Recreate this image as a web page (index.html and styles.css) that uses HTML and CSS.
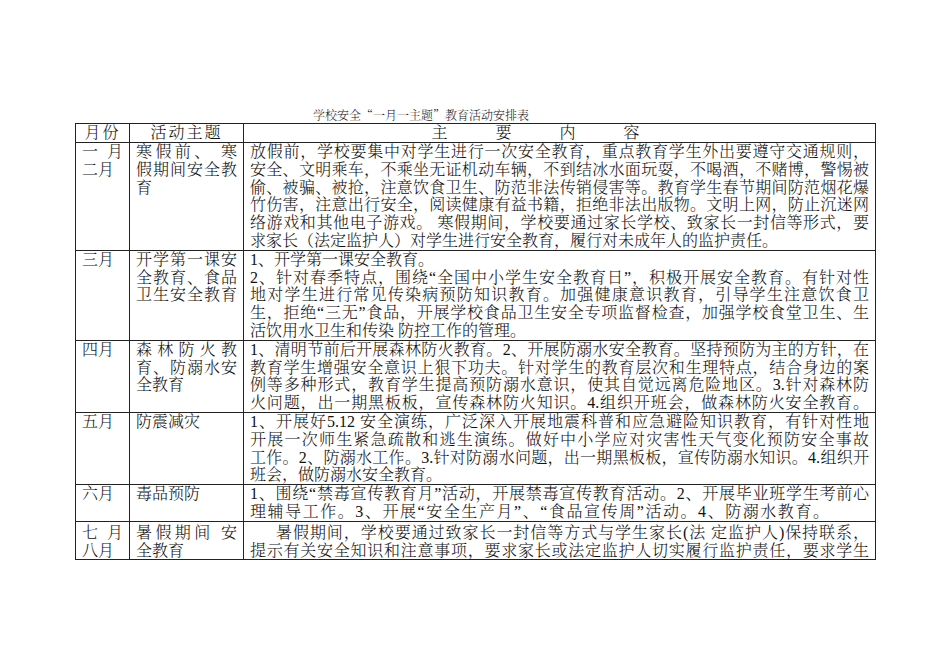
FILE: index.html
```html
<!DOCTYPE html>
<html lang="zh-CN">
<head>
<meta charset="utf-8">
<title>学校安全“一月一主题”教育活动安排表</title>
<link rel="stylesheet" href="styles.css">
</head>
<body>
<div class="page">
  <p class="title">学校安全“一月一主题”教育活动安排表</p>
  <table class="plan">
    <colgroup>
      <col class="col-month">
      <col class="col-theme">
      <col class="col-content">
    </colgroup>
    <thead>
      <tr>
        <th class="h-month">月份</th>
        <th class="h-theme">活动主题</th>
        <th class="h-content">主要内容</th>
      </tr>
    </thead>
    <tbody>
      <tr>
        <td class="month"><span class="jl">一月</span><span class="ln">二月</span></td>
        <td class="theme"><span class="jl">寒假前、 寒</span><span class="jl">假期间安全教</span><span class="ln">育</span></td>
        <td class="content">
          <span class="jl">放假前，学校要集中对学生进行一次安全教育，重点教育学生外出要遵守交通规则，</span>
          <span class="jl">安全、文明乘车，不乘坐无证机动车辆，不到结冰水面玩耍，不喝酒，不赌博，警惕被</span>
          <span class="jl">偷、被骗、被抢，注意饮食卫生、防范非法传销侵害等。教育学生春节期间防范烟花爆</span>
          <span class="jl">竹伤害，注意出行安全，阅读健康有益书籍，拒绝非法出版物。文明上网，防止沉迷网</span>
          <span class="jl">络游戏和其他电子游戏。 寒假期间，学校要通过家长学校、致家长一封信等形式，要</span>
          <span class="ln">求家长（法定监护人）对学生进行安全教育，履行对未成年人的监护责任。</span>
        </td>
      </tr>
      <tr>
        <td class="month"><span class="ln">三月</span></td>
        <td class="theme"><span class="jl">开学第一课安</span><span class="jl">全教育、食品</span><span class="jl">卫生安全教育</span></td>
        <td class="content">
          <span class="ln">1、开学第一课安全教育。</span>
          <span class="jl">2、针对春季特点，围绕“全国中小学生安全教育日”，积极开展安全教育。有针对性</span>
          <span class="jl">地对学生进行常见传染病预防知识教育。加强健康意识教育，引导学生注意饮食卫</span>
          <span class="jl">生，拒绝“三无”食品，开展学校食品卫生安全专项监督检查，加强学校食堂卫生、生</span>
          <span class="ln">活饮用水卫生和传染 防控工作的管理。</span>
        </td>
      </tr>
      <tr>
        <td class="month"><span class="ln">四月</span></td>
        <td class="theme"><span class="jl">森林防火教</span><span class="jl">育、防溺水安</span><span class="ln">全教育</span></td>
        <td class="content">
          <span class="jl">1、清明节前后开展森林防火教育。2、开展防溺水安全教育。坚持预防为主的方针，在</span>
          <span class="jl">教育学生增强安全意识上狠下功夫。针对学生的教育层次和生理特点，结合身边的案</span>
          <span class="jl">例等多种形式，教育学生提高预防溺水意识，使其自觉远离危险地区。3.针对森林防</span>
          <span class="jl">火问题，出一期黑板板，宣传森林防火知识。4.组织开班会，做森林防火安全教育。</span>
        </td>
      </tr>
      <tr>
        <td class="month"><span class="ln">五月</span></td>
        <td class="theme"><span class="ln">防震减灾</span></td>
        <td class="content">
          <span class="jl">1、开展好5.12 安全演练，广泛深入开展地震科普和应急避险知识教育，有针对性地</span>
          <span class="jl">开展一次师生紧急疏散和逃生演练。做好中小学应对灾害性天气变化预防安全事故</span>
          <span class="jl">工作。2、防溺水工作。3.针对防溺水问题，出一期黑板板，宣传防溺水知识。4.组织开</span>
          <span class="ln">班会，做防溺水安全教育。</span>
        </td>
      </tr>
      <tr>
        <td class="month"><span class="ln">六月</span></td>
        <td class="theme"><span class="ln">毒品预防</span></td>
        <td class="content">
          <span class="jl">1、围绕“禁毒宣传教育月”活动，开展禁毒宣传教育活动。2、开展毕业班学生考前心</span>
          <span class="jl short">理辅导工作。3、开展“安全生产月”、“食品宣传周”活动。4、防溺水教育。</span>
        </td>
      </tr>
      <tr class="last">
        <td class="month"><span class="jl">七月</span><span class="ln">八月</span></td>
        <td class="theme"><span class="jl">暑假期间 安</span><span class="ln">全教育</span></td>
        <td class="content">
          <span class="jl indent">暑假期间，学校要通过致家长一封信等方式与学生家长(法 定监护人)保持联系，</span>
          <span class="jl">提示有关安全知识和注意事项，要求家长或法定监护人切实履行监护责任，要求学生</span>
        </td>
      </tr>
    </tbody>
  </table>
</div>
</body>
</html>
```

FILE: styles.css
```css
html, body {
  margin: 0;
  padding: 0;
  background: #ffffff;
}

body {
  font-family: "Liberation Serif", "Noto Serif CJK SC", "Noto Sans CJK SC", serif;
  font-weight: 300;
  color: #111111;
}

.page {
  width: 950px;
  height: 672px;
  padding: 107px 0 0 75px;
  box-sizing: border-box;
}

.title {
  margin: 0;
  width: 692px;
  text-align: center;
  font-family: "Noto Serif CJK SC", "Noto Sans CJK SC", serif;
  font-size: 12px;
  line-height: 16px;
  color: #222222;
}

.plan {
  border-collapse: collapse;
  table-layout: fixed;
  width: 800px;
  border: 1.5px solid #333333;
  font-size: 16px;
  line-height: 17.8px;
}

.col-month { width: 54px; }
.col-theme { width: 114px; }
.col-content { width: 632px; }

.plan th,
.plan td {
  border: 1px solid #222222;
  vertical-align: top;
  padding: 0 6px;
  font-weight: 300;
}

.plan th {
  line-height: 18px;
  padding-top: 0;
  padding-bottom: 0;
}

.h-month {
  text-align: center;
  letter-spacing: 2px;
}

.h-theme {
  text-align: center;
  letter-spacing: 2px;
}

.h-content {
  text-align: center;
  letter-spacing: 48px;
  padding-left: 0;
}

.month {
  padding: 0 4px 0 7px;
}

.ln {
  display: block;
  text-align: left;
  white-space: nowrap;
}

.jl {
  display: block;
  text-align: justify;
  text-align-last: justify;
  text-justify: inter-character;
}

.short {
  margin-right: 40px;
}

.indent {
  text-indent: 26px;
}

.last td {
  padding-top: 2px;
}
```
